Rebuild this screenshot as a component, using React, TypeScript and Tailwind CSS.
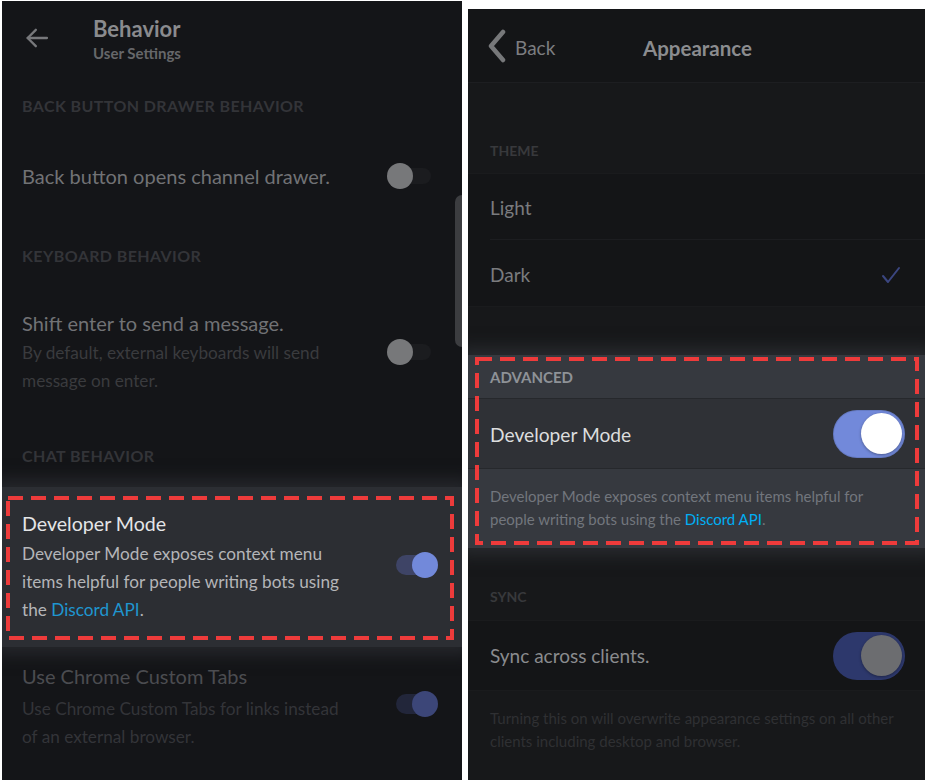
import React from "react";

const font = { fontFamily: "Lato, 'Open Sans', sans-serif" };

function DashBox({ x, y, w, h }: { x: number; y: number; w: number; h: number }) {
  return (
    <svg
      className="absolute pointer-events-none"
      style={{ left: x - 4, top: y - 4 }}
      width={w + 8}
      height={h + 8}
    >
      <rect
        x={4}
        y={4}
        width={w}
        height={h}
        fill="none"
        stroke="#ee3b3b"
        strokeWidth={4}
        strokeDasharray="15 8"
      />
    </svg>
  );
}

function LeftPanel() {
  return (
    <div className="relative mt-[1px] ml-[2px] w-[460px] h-[779px] bg-[#141518] overflow-hidden" style={font}>
      {/* header */}
      <div className="flex items-start pt-[15px]">
        <div className="w-[91px] pl-[21px] pt-[8px]">
          <svg width="28" height="28" viewBox="0 0 24 24" fill="none" stroke="#77787b" strokeWidth="2" strokeLinecap="round" strokeLinejoin="round">
            <path d="M20.5 12H4" />
            <path d="M11 5l-7 7 7 7" />
          </svg>
        </div>
        <div className="flex flex-col">
          <span className="text-[22px] leading-[26px] font-bold text-[#8a8b8e]">Behavior</span>
          <span className="text-[15px] leading-[18px] font-bold text-[#66676a] mt-[2px]">User Settings</span>
        </div>
      </div>

      <div className="mt-[34px] px-[20px] text-[16px] leading-[20px] font-bold text-[#333438] tracking-[0.4px]">
        BACK BUTTON DRAWER BEHAVIOR
      </div>

      <div className="mt-[30px] h-[60px] flex items-center justify-between pl-[20px] pr-[31px]">
        <span className="text-[20px] text-[#717275]">Back button opens channel drawer.</span>
        <div className="relative w-[44px] h-[26px] flex items-center">
          <div className="absolute left-[4px] right-0 h-[16px] rounded-full bg-[#1b1c1f]" />
          <div className="relative w-[26px] h-[26px] rounded-full bg-[#77787a]" />
        </div>
      </div>

      <div className="mt-[40px] px-[20px] text-[16px] leading-[20px] font-bold text-[#333438] tracking-[0.4px]">
        KEYBOARD BEHAVIOR
      </div>

      <div className="mt-[43px] flex items-center justify-between pl-[20px] pr-[31px]">
        <div className="flex flex-col">
          <span className="text-[20px] leading-[28px] text-[#717275]">Shift enter to send a message.</span>
          <span className="mt-[2px] text-[17.2px] leading-[28px] text-[#3a3b3e]">
            By default, external keyboards will send
            <br />
            message on enter.
          </span>
        </div>
        <div className="relative w-[44px] h-[26px] flex items-center">
          <div className="absolute left-[4px] right-0 h-[16px] rounded-full bg-[#1b1c1f]" />
          <div className="relative w-[26px] h-[26px] rounded-full bg-[#77787a]" />
        </div>
      </div>

      <div className="mt-[51px] px-[20px] text-[16px] leading-[20px] font-bold text-[#333438] tracking-[0.4px]">
        CHAT BEHAVIOR
      </div>

      {/* highlighted developer mode */}
      <div className="mt-[21px] h-[160px] bg-[#2c2e33] shadow-[0_0_14px_8px_rgba(44,46,51,0.7)] flex items-center justify-between pl-[20px] pr-[24px]">
        <div className="flex flex-col">
          <span className="text-[19.6px] leading-[28px] text-[#e4e5e7]">Developer Mode</span>
          <span className="mt-[2px] text-[17.2px] leading-[28px] text-[#b4b5b8]">
            Developer Mode exposes context menu
            <br />
            items helpful for people writing bots using
            <br />
            the <span className="text-[#1f96d0]">Discord API</span>.
          </span>
        </div>
        <div className="relative w-[42px] h-[26px] flex items-center mt-[-4px]">
          <div className="absolute left-0 right-[6px] h-[20px] rounded-full bg-[#3e4466]" />
          <div className="absolute right-0 w-[26px] h-[26px] rounded-full bg-[#7289da]" />
        </div>
      </div>

      <div className="mt-[15px] flex items-start justify-between pl-[20px] pr-[24px]">
        <div className="flex flex-col">
          <span className="text-[20px] leading-[28px] text-[#4b4c50]">Use Chrome Custom Tabs</span>
          <span className="mt-[5px] text-[17.2px] leading-[28px] text-[#333438]">
            Use Chrome Custom Tabs for links instead
            <br />
            of an external browser.
          </span>
        </div>
        <div className="relative w-[42px] h-[26px] flex items-center mt-[29px]">
          <div className="absolute left-0 right-[6px] h-[20px] rounded-full bg-[#22263a]" />
          <div className="absolute right-0 w-[26px] h-[26px] rounded-full bg-[#3c4678]" />
        </div>
      </div>

      {/* scrollbar */}
      <div className="absolute right-0 top-[194px] w-[7px] h-[152px] rounded-l-full bg-[#3c3d40]" />

      <DashBox x={6} y={497} w={444} h={140} />
    </div>
  );
}

function RightPanel() {
  return (
    <div className="relative mt-[9px] w-[457px] h-[771px] bg-[#17181a] overflow-hidden" style={font}>
      {/* header */}
      <div className="h-[74px] bg-[#141517] border-b border-[#1d1e21] flex items-center pt-[5px]">
        <div className="flex items-center pl-[19px] w-[175px]">
          <svg width="20" height="34" viewBox="0 0 20 34" fill="none" stroke="#77787a" strokeWidth="4.5" strokeLinecap="round" strokeLinejoin="round" className="-mt-[4px]">
            <path d="M16 3L4 17l12 14" />
          </svg>
          <span className="ml-[8px] text-[19px] text-[#7c7d80]">Back</span>
        </div>
        <span className="text-[20.5px] font-bold text-[#8b8c8f]">Appearance</span>
      </div>

      <div className="mt-[58px] px-[22px] text-[14px] leading-[20px] font-bold text-[#38393c]">THEME</div>

      <div className="mt-[12px] bg-[#141517] border-y border-[#1a1b1d]">
        <div className="ml-[22px] h-[66px] flex items-center pt-[4px] border-b border-[#1c1d20]">
          <span className="text-[19px] text-[#7a7b7e]">Light</span>
        </div>
        <div className="h-[66px] flex items-center justify-between pt-[4px] pl-[22px] pr-[24px]">
          <span className="text-[19px] text-[#7a7b7e]">Dark</span>
          <svg width="20" height="18" viewBox="0 0 20 18" fill="none" stroke="#3b4680" strokeWidth="2" strokeLinecap="round" strokeLinejoin="round">
            <path d="M2 10l5 6L18 2" />
          </svg>
        </div>
      </div>

      {/* advanced highlighted */}
      <div className="mt-[48px] shadow-[0_0_14px_8px_rgba(50,53,59,0.6)]">
        <div className="h-[43px] bg-[#36393f] flex items-end px-[22px]">
          <span className="text-[15px] font-bold text-[#8e9297] leading-[20px] mb-[11px]">ADVANCED</span>
        </div>
        <div className="h-[71px] bg-[#2f3136] border-y border-[#26282c] flex items-center justify-between pl-[22px] pr-[20px]">
          <span className="text-[19.2px] text-[#dcddde] pt-[4px]">Developer Mode</span>
          <div className="relative w-[72px] h-[48px] rounded-full bg-[#7289da] flex items-center justify-end pr-[3px] shadow-[inset_0_0_0_1px_rgba(0,0,0,0.1)]">
            <div className="w-[41px] h-[41px] rounded-full bg-white shadow-[0_1px_3px_rgba(0,0,0,0.35)]" />
          </div>
        </div>
        <div className="h-[79px] bg-[#36393f] px-[22px] pt-[16px]">
          <p className="text-[15px] leading-[23px] text-[#72767d]">
            Developer Mode exposes context menu items helpful for
            <br />
            people writing bots using the <span className="text-[#00aff4]">Discord API</span>.
          </p>
        </div>
      </div>

      <div className="mt-[39px] px-[22px] text-[14px] leading-[20px] font-bold text-[#38393c]">SYNC</div>

      <div className="mt-[13px] h-[71px] bg-[#141517] border-y border-[#1a1b1d] flex items-center justify-between pl-[22px] pr-[20px]">
        <span className="text-[19px] text-[#8a8b8e] pt-[2px]">Sync across clients.</span>
        <div className="w-[72px] h-[48px] rounded-full bg-[#2d386c] flex items-center justify-end pr-[3px]">
          <div className="w-[41px] h-[41px] rounded-full bg-[#6c6d70] shadow-[0_1px_3px_rgba(0,0,0,0.35)]" />
        </div>
      </div>

      <div className="px-[22px] pt-[16px]">
        <p className="text-[15px] leading-[23px] text-[#2f3033]">
          Turning this on will overwrite appearance settings on all other
          <br />
          clients including desktop and browser.
        </p>
      </div>

      <DashBox x={9} y={350} w={440} h={184} />
    </div>
  );
}

export default function App() {
  return (
    <div className="w-[926px] h-[783px] bg-white flex items-start overflow-hidden">
      <LeftPanel />
      <div className="w-[6px]" />
      <RightPanel />
    </div>
  );
}
